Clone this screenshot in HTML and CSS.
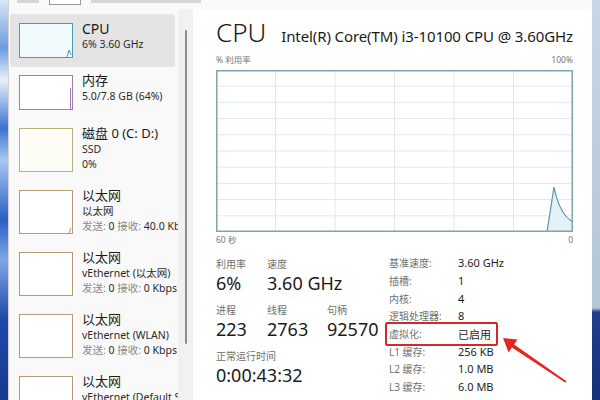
FILE: index.html
```html
<!DOCTYPE html>
<html lang="zh-CN">
<head>
    <meta charset="utf-8">
    <title>任务管理器 - 性能</title>
    <link rel="stylesheet" href="styles.css">
</head>
<body>
    <div class="screen">
        <div class="wall-left"></div>
        <div class="window">
            <div class="toolbar">
                <span class="tb-icon"></span>
                <span class="tb-box"></span>
                <span class="tb-icon wide"></span>
            </div>
            <div class="panes">
                <nav class="side">
                    <div class="item active">
                        <div class="thumb cpu">
                            <svg width="52" height="33" viewBox="0 0 52 33"><path d="M47 33 L49 26 L51 31" fill="none" stroke="#4b9cb3" stroke-width="1"/></svg>
                        </div>
                        <div class="info">
                            <div class="title">CPU</div>
                            <div class="sub">6% 3.60 GHz</div>
                        </div>
                    </div>
                    <div class="item">
                        <div class="thumb mem">
                            <svg width="52" height="33" viewBox="0 0 52 33"><path d="M50.5 12 V33" stroke="#a67bb3" stroke-width="1"/></svg>
                        </div>
                        <div class="info">
                            <div class="title cjk">内存</div>
                            <div class="sub">5.0/7.8 GB (64%)</div>
                        </div>
                    </div>
                    <div class="item tall">
                        <div class="thumb disk"></div>
                        <div class="info">
                            <div class="title cjk">磁盘 0 (C: D:)</div>
                            <div class="sub">SSD</div>
                            <div class="sub">0%</div>
                        </div>
                    </div>
                    <div class="item tall">
                        <div class="thumb net">
                            <svg width="52" height="42" viewBox="0 0 52 42"><path d="M49 42 L51 37" stroke="#b09b72" stroke-width="1"/></svg>
                        </div>
                        <div class="info">
                            <div class="title cjk">以太网</div>
                            <div class="sub">以太网</div>
                            <div class="sub"><span class="dim">发送:</span> 0 <span class="dim">接收:</span> 40.0 Kbps</div>
                        </div>
                    </div>
                    <div class="item tall">
                        <div class="thumb net"></div>
                        <div class="info">
                            <div class="title cjk">以太网</div>
                            <div class="sub">vEthernet (以太网)</div>
                            <div class="sub"><span class="dim">发送:</span> 0 <span class="dim">接收:</span> 0 Kbps</div>
                        </div>
                    </div>
                    <div class="item tall">
                        <div class="thumb net"></div>
                        <div class="info">
                            <div class="title cjk">以太网</div>
                            <div class="sub">vEthernet (WLAN)</div>
                            <div class="sub"><span class="dim">发送:</span> 0 <span class="dim">接收:</span> 0 Kbps</div>
                        </div>
                    </div>
                    <div class="item tall">
                        <div class="thumb net"></div>
                        <div class="info">
                            <div class="title cjk">以太网</div>
                            <div class="sub">vEthernet (Default Switch)</div>
                            <div class="sub"><span class="dim">发送:</span> 0 <span class="dim">接收:</span> 0 Kbps</div>
                        </div>
                    </div>
                </nav>
                <div class="scroll"><div class="scroll-bar"></div></div>
                <main class="main">
                    <div class="head">
                        <h1>CPU</h1>
                        <div class="model">Intel(R) Core(TM) i3-10100 CPU @ 3.60GHz</div>
                    </div>
                    <div class="axis top"><span>% 利用率</span><span>100%</span></div>
                    <div class="graph">
                        <svg width="357" height="162" viewBox="0 0 357 162">
                            <path d="M0 16.2H357M0 32.4H357M0 48.6H357M0 64.8H357M0 81H357M0 97.2H357M0 113.4H357M0 129.6H357M0 145.8H357" stroke="#e1e8eb" stroke-width="1"/>
                            <path d="M59.5 0V162M119 0V162M178.5 0V162M238 0V162M297.5 0V162" stroke="#e1e8eb" stroke-width="1"/>
                            <path d="M331 162 L338 117 C341 132 346 146 357 152 L357 162 Z" fill="#e4f1f7"/>
                            <path d="M331 162 L338 117 C341 132 346 146 357 152" fill="none" stroke="#5a93a8" stroke-width="1.2"/>
                            <rect x="0.75" y="0.75" width="355.5" height="160.5" fill="none" stroke="#7ea4b0" stroke-width="1.5"/>
                        </svg>
                    </div>
                    <div class="axis bottom"><span>60 秒</span><span>0</span></div>
                    <div class="stats">
                        <div class="live">
                            <div class="cell"><div class="lbl">利用率</div><div class="val">6%</div></div>
                            <div class="cell"><div class="lbl">速度</div><div class="val">3.60 GHz</div></div>
                            <div class="cell"></div>
                            <div class="cell"><div class="lbl">进程</div><div class="val">223</div></div>
                            <div class="cell"><div class="lbl">线程</div><div class="val">2763</div></div>
                            <div class="cell"><div class="lbl">句柄</div><div class="val">92570</div></div>
                            <div class="cell span"><div class="lbl">正常运行时间</div><div class="val">0:00:43:32</div></div>
                        </div>
                        <div class="specs">
                            <div class="row"><span class="k">基准速度:</span><span class="v">3.60 GHz</span></div>
                            <div class="row"><span class="k">插槽:</span><span class="v">1</span></div>
                            <div class="row"><span class="k">内核:</span><span class="v">4</span></div>
                            <div class="row"><span class="k">逻辑处理器:</span><span class="v">8</span></div>
                            <div class="row mark"><span class="k">虚拟化:</span><span class="v">已启用</span></div>
                            <div class="row"><span class="k">L1 缓存:</span><span class="v">256 KB</span></div>
                            <div class="row"><span class="k">L2 缓存:</span><span class="v">1.0 MB</span></div>
                            <div class="row"><span class="k">L3 缓存:</span><span class="v">6.0 MB</span></div>
                        </div>
                    </div>
                </main>
            </div>
        </div>
        <div class="wall-right"></div>
    </div>
    <svg class="arrow" width="600" height="400" viewBox="0 0 600 400">
        <polygon points="503,338 517.4,339.6 514.1,344.4 566.5,381.3 565.5,382.7 511.9,347.6 508.6,352.4" fill="#e5261f"/>
    </svg>
</body>
</html>
```

FILE: styles.css
```css
body {
    margin: 0;
    padding: 0;
    position: relative;
    width: 600px;
    height: 400px;
    overflow: hidden;
    font-family: "Noto Sans", "Noto Sans CJK SC", sans-serif;
    color: #1a1a1a;
}

.screen {
    display: flex;
    height: 400px;
}

.wall-left {
    width: 8px;
    background: linear-gradient(180deg, #d9e6f6 0, #6d9be0 12%, #e9f1fb 20%, #3a73d0 32%, #a9c6ef 40%, #2b5fc4 55%, #7ea6e6 65%, #1f48a8 80%, #163a90 100%);
}

.wall-right {
    width: 8px;
    background: linear-gradient(180deg, #c8d5e4 0, #b4c5d8 77%, #223f8c 78%, #16307a 100%);
}

.window {
    width: 584px;
    display: flex;
    flex-direction: column;
    background-color: #f9f9f9;
    border-left: 1px solid #d2d2d2;
    box-sizing: border-box;
}

/* cut-off toolbar at the top */
.toolbar {
    height: 9px;
    display: flex;
    gap: 10px;
    padding-left: 8px;
    align-items: flex-start;
}

.tb-icon {
    width: 22px;
    height: 3px;
    background-color: #d6d6d6;
}

.tb-icon.wide {
    width: 110px;
}

.tb-box {
    width: 30px;
    height: 4px;
    border: 1px solid #9a9a9a;
    border-top: 0;
    background-color: #fff;
}

.panes {
    display: flex;
    flex: 1;
    min-height: 0;
}

/* left list */
.side {
    width: 169px;
    padding-top: 5px;
    overflow: hidden;
}

.item {
    display: flex;
    gap: 9px;
    width: 165px;
    height: 53px;
    margin-left: 1px;
    padding: 9px 0 0 9px;
    box-sizing: border-box;
    white-space: nowrap;
}

.item.tall {
    height: 62px;
}

.item + .item {
    height: 52px;
    padding-top: 8px;
}

.item + .item.tall {
    height: 62px;
    padding-top: 9px;
}

.item.active {
    background-color: #e4e4e4;
    border-radius: 3px;
}

.thumb {
    flex: none;
    width: 54px;
    height: 35px;
    box-sizing: border-box;
    border: 1px solid #999;
    background-color: #fff;
}

.thumb svg {
    display: block;
}

.tall .thumb {
    height: 44px;
}

.thumb.cpu {
    border-color: #4b9cb3;
    background-color: #f1fbfd;
}

.thumb.mem {
    border-color: #a67bb3;
}

.thumb.disk {
    border-color: #b3b27f;
    background-color: #fdfdf5;
}

.thumb.net {
    border-color: #b29d74;
}

.info {
    margin-top: -3px;
}

.title {
    font-size: 14px;
    line-height: 17px;
}

.title.cjk {
    font-size: 13px;
}

.sub {
    font-size: 10.5px;
    line-height: 15px;
    color: #2a2a2a;
}

.dim {
    color: #8a8a8a;
}

.scroll {
    width: 15px;
    background-color: #f1f1f1;
    padding-top: 21px;
}

.scroll-bar {
    width: 2px;
    height: 314px;
    margin-left: 7px;
    background-color: #8c8c8c;
    border-radius: 1px;
}

/* right panel */
.main {
    flex: 1;
    background-color: #fff;
    padding: 9px 19px 0 23px;
    position: relative;
}

.head {
    display: flex;
    justify-content: space-between;
    align-items: baseline;
    height: 28px;
}

.head h1 {
    margin: 0;
    font-size: 26px;
    line-height: 28px;
    font-weight: 300;
}

.model {
    font-size: 15px;
    letter-spacing: -0.1px;
}

.axis {
    display: flex;
    justify-content: space-between;
    font-size: 8.5px;
    line-height: 12px;
    color: #777;
}

.axis.top {
    margin-top: 8px;
    margin-bottom: 4px;
}

.axis.bottom {
    margin-top: 2px;
}

.graph svg {
    display: block;
}

.stats {
    display: flex;
    margin-top: 8px;
}

.live {
    width: 173px;
    flex: none;
    display: grid;
    grid-template-columns: 51px 60px auto;
    row-gap: 8px;
    padding-top: 3px;
    align-content: start;
}

.cell {
    white-space: nowrap;
}

.cell.span {
    grid-column: 1 / 4;
}

.lbl {
    font-size: 10px;
    line-height: 14px;
    color: #707070;
}

.val {
    font-size: 18px;
    line-height: 24px;
}

.specs {
    display: flex;
    flex-direction: column;
}

.row {
    display: flex;
    height: 17.7px;
    align-items: center;
    position: relative;
    white-space: nowrap;
}

.k {
    width: 69px;
    font-size: 10px;
    color: #707070;
}

.v {
    font-size: 11px;
    color: #1e1e1e;
}

/* red annotation around the virtualization row */
.row.mark::after {
    content: "";
    position: absolute;
    left: -4px;
    top: -3px;
    bottom: -4px;
    width: 109px;
    border: 2px solid #d3292b;
    border-radius: 2px;
}

.arrow {
    position: absolute;
    left: 0;
    top: 0;
    pointer-events: none;
}
```
